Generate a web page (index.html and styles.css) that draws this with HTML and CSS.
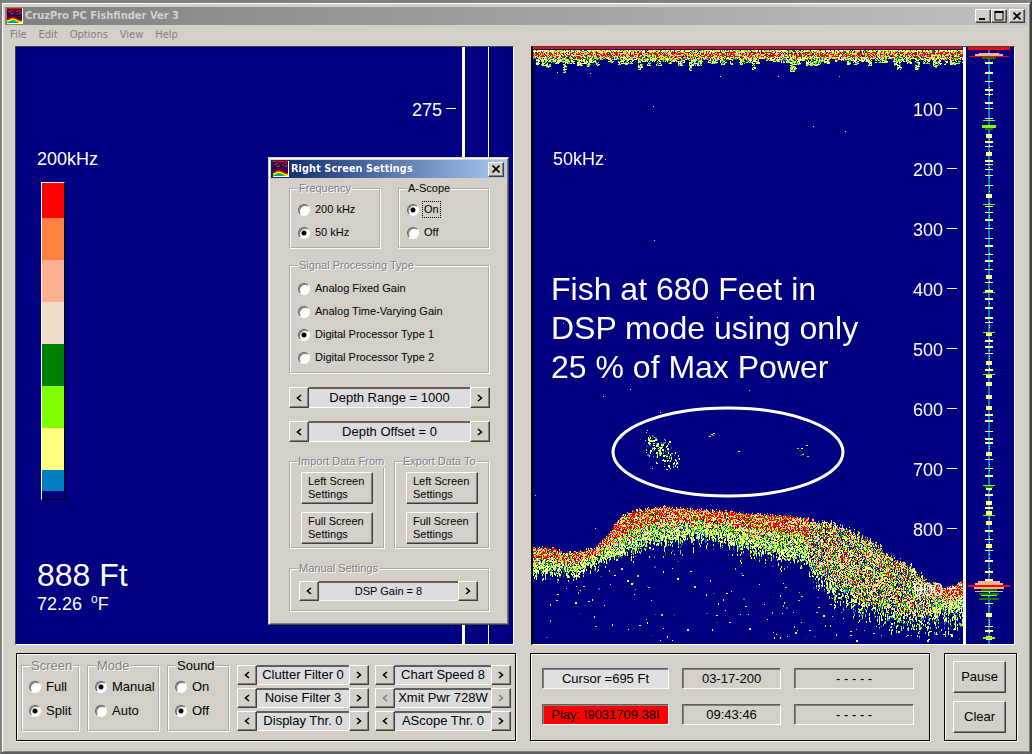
FILE: index.html
```html
<!DOCTYPE html>
<html lang="en">
<head>
<meta charset="utf-8">
<title>CruzPro PC Fishfinder Ver 3</title>
<link rel="stylesheet" href="styles.css">
</head>
<body>
<svg class="defs" width="0" height="0" aria-hidden="true">
  <symbol id="app" viewBox="0 0 16 16">
    <rect width="16" height="16" fill="#400040"/>
    <path d="M0 .5h16" stroke="#f00"/>
    <path d="M1 3.500h2M3 2.500h3M6 4.500h1M9 3.500h2M11 2.500h3M14 4.500h1" stroke="#f00"/>
    <path d="M4 5.500h2M10 5.500h1" stroke="#0a0"/><path d="M3 4h1M12 5h2" stroke="#24f" stroke-width="2"/>
    <path d="M0 11c2 0 3-2 6-2s5 3 9 3v3H0z" fill="#f00"/>
    <path d="M0 12.500c2 0 3-2 6-2s5 3 9 3V15H0z" fill="#ff0"/>
    <path d="M0 14c2 0 3-2 6-2s4 2 7 3H0z" fill="#0c0"/>
    <path d="M2 15c2-2 5-2 8 0z" fill="#08f"/>
    <path d="M15.500 0v16M0 15.500h16" stroke="#fff"/>
  </symbol>
  <symbol id="close" viewBox="0 0 8 8"><path d="M.5.5l7 7M7.500.5l-7 7" stroke="#000" stroke-width="1.600"/></symbol>
  <symbol id="prev" viewBox="0 0 8 8"><path d="M6 1L2.500 4 6 7" fill="none" stroke="currentColor" stroke-width="1.600"/></symbol>
  <symbol id="next" viewBox="0 0 8 8"><path d="M2 1l3.500 3L2 7" fill="none" stroke="currentColor" stroke-width="1.600"/></symbol>
</svg>
<main class="window">
  <header class="titlebar">
    <svg class="app-icon"><use href="#app"/></svg>
    <h1>CruzPro PC Fishfinder Ver 3</h1>
    <div class="win-buttons">
      <button class="cap" aria-label="Minimize"><svg viewBox="0 0 10 10"><path d="M1 8h6" stroke="#000" stroke-width="2"/></svg></button>
      <button class="cap" aria-label="Maximize"><svg viewBox="0 0 10 10"><path d="M.5 1h9" stroke="#000" stroke-width="2"/><path d="M1 1v8h8V1" fill="none" stroke="#000"/></svg></button>
      <button class="cap cap-close" aria-label="Close"><svg><use href="#close"/></svg></button>
    </div>
  </header>
  <nav class="menu"><button>File</button><button>Edit</button><button>Options</button><button>View</button><button>Help</button></nav>

  <div class="screens">
    <section class="screen left-screen" aria-label="Left screen">
      <div class="chart">
        <div class="readings">
          <p class="freq">200kHz</p>
          <div class="scale"><i class="c1"></i><i class="c2"></i><i class="c3"></i><i class="c4"></i><i class="c5"></i><i class="c6"></i><i class="c7"></i><i class="c8"></i><i class="c9"></i></div>
          <p class="depth">888 Ft</p>
          <p class="temp">72.26 <sup>o</sup>F</p>
        </div>
        <ol class="marks"><li>275</li></ol>
      </div>
      <div class="scope plain"></div>
    </section>
    <section class="screen right-screen" aria-label="Right screen">
      <div class="chart">
        <canvas id="sonar" width="430" height="596"></canvas>
        <svg class="ring" viewBox="0 0 234 92"><ellipse cx="117" cy="46" rx="115" ry="44" fill="none" stroke="#fff" stroke-width="3"/></svg>
        <p class="freq">50kHz</p>
        <p class="note">Fish at 680 Feet in<br>DSP mode using only<br>25 % of Max Power</p>
        <ol class="marks"><li>100</li><li>200</li><li>300</li><li>400</li><li>500</li><li>600</li><li>700</li><li>800</li><li>900</li></ol>
      </div>
      <div class="scope"><canvas id="ascope" width="48" height="596"></canvas></div>
    </section>
  </div>

  <footer class="controls">
    <section class="panel panel-main">
      <fieldset class="g-screen"><legend class="dim">Screen</legend>
        <label><input type="radio" name="screen">Full</label>
        <label><input type="radio" name="screen" checked>Split</label></fieldset>
      <fieldset class="g-mode"><legend class="dim">Mode</legend>
        <label><input type="radio" name="mode" checked>Manual</label>
        <label><input type="radio" name="mode">Auto</label></fieldset>
      <fieldset class="g-sound"><legend>Sound</legend>
        <label><input type="radio" name="sound">On</label>
        <label><input type="radio" name="sound" checked>Off</label></fieldset>
      <div class="spins">
        <div class="spin"><button aria-label="Decrease"><svg><use href="#prev"/></svg></button><output>Clutter Filter 0</output><button aria-label="Increase"><svg><use href="#next"/></svg></button></div>
        <div class="spin"><button aria-label="Decrease"><svg><use href="#prev"/></svg></button><output>Chart Speed 8</output><button aria-label="Increase"><svg><use href="#next"/></svg></button></div>
        <div class="spin"><button aria-label="Decrease"><svg><use href="#prev"/></svg></button><output>Noise Filter 3</output><button aria-label="Increase"><svg><use href="#next"/></svg></button></div>
        <div class="spin"><button disabled aria-label="Decrease"><svg><use href="#prev"/></svg></button><output>Xmit Pwr 728W</output><button disabled aria-label="Increase"><svg><use href="#next"/></svg></button></div>
        <div class="spin"><button aria-label="Decrease"><svg><use href="#prev"/></svg></button><output>Display Thr. 0</output><button aria-label="Increase"><svg><use href="#next"/></svg></button></div>
        <div class="spin"><button aria-label="Decrease"><svg><use href="#prev"/></svg></button><output>AScope Thr. 0</output><button aria-label="Increase"><svg><use href="#next"/></svg></button></div>
      </div>
    </section>
    <section class="panel panel-status">
      <output class="light">Cursor =695 Ft</output><output>03-17-200</output><output>- - - - -</output>
      <output class="alert">Play: I9031709.38I</output><output>09:43:46</output><output>- - - - -</output>
    </section>
    <section class="panel panel-actions"><button>Pause</button><button>Clear</button></section>
  </footer>
</main>

<section class="dialog" role="dialog" aria-labelledby="dlg-title">
  <header class="titlebar active">
    <svg class="app-icon"><use href="#app"/></svg>
    <h2 id="dlg-title">Right Screen Settings</h2>
    <button class="cap cap-close" aria-label="Close"><svg><use href="#close"/></svg></button>
  </header>
  <div class="dialog-body">
    <div class="pair wide">
      <fieldset><legend class="dim">Frequency</legend>
        <label><input type="radio" name="freq">200 kHz</label>
        <label><input type="radio" name="freq" checked>50 kHz</label></fieldset>
      <fieldset><legend>A-Scope</legend>
        <label><input type="radio" name="scope" checked><span class="focused">On</span></label>
        <label><input type="radio" name="scope">Off</label></fieldset>
    </div>
    <fieldset class="dsp"><legend class="dim">Signal Processing Type</legend>
      <label><input type="radio" name="dsp">Analog Fixed Gain</label>
      <label><input type="radio" name="dsp">Analog Time-Varying Gain</label>
      <label><input type="radio" name="dsp" checked>Digital Processor Type 1</label>
      <label><input type="radio" name="dsp">Digital Processor Type 2</label></fieldset>
    <div class="spin tall"><button aria-label="Decrease"><svg><use href="#prev"/></svg></button><output>Depth Range = 1000</output><button aria-label="Increase"><svg><use href="#next"/></svg></button></div>
    <div class="spin tall"><button aria-label="Decrease"><svg><use href="#prev"/></svg></button><output>Depth Offset = 0</output><button aria-label="Increase"><svg><use href="#next"/></svg></button></div>
    <div class="pair">
      <fieldset class="copy"><legend class="dim">Import Data From</legend><button>Left Screen<br>Settings</button><button>Full Screen<br>Settings</button></fieldset>
      <fieldset class="copy"><legend class="dim">Export Data To</legend><button>Left Screen<br>Settings</button><button>Full Screen<br>Settings</button></fieldset>
    </div>
    <fieldset class="manual"><legend class="dim">Manual Settings</legend>
      <div class="spin small"><button aria-label="Decrease"><svg><use href="#prev"/></svg></button><output>DSP Gain = 8</output><button aria-label="Increase"><svg><use href="#next"/></svg></button></div></fieldset>
  </div>
</section>
<script src="sonar.js"></script>
</body>
</html>
```

FILE: styles.css
```css
* { box-sizing: border-box; }
body {
  margin: 0;
  background: #808080;
  color: #000;
  font: 13px/16px "Liberation Sans", Arial, sans-serif;
}
p, h1, h2, ol { margin: 0; padding: 0; }
.defs { position: absolute; }
button { font: inherit; color: inherit; padding: 0; }

.window {
  display: flex;
  flex-direction: column;
  min-height: 100vh;
  background: #d4d0c8;
  border: 2px solid;
  border-color: #808080 #404040 #606060 #808080;
  border-top-width: 3px;
  box-shadow: inset 1px 1px #fff, inset -1px -1px #808080;
  padding: 4px 3px 0 3px;
}
.titlebar {
  display: flex;
  align-items: center;
  gap: 2px;
  height: 18px;
  padding: 0 2px;
  background: linear-gradient(90deg, #808080, #c0c0c0);
  color: #d4d0c8;
}
.titlebar.active { background: linear-gradient(90deg, #0a246a, #a6caf0); color: #fff; }
.titlebar h1, .titlebar h2 { flex: 1; font: bold 11px/16px "DejaVu Sans Condensed", "Noto Sans", sans-serif; white-space: nowrap; }
.app-icon { width: 16px; height: 16px; flex: none; }
.win-buttons { display: flex; }
.cap {
  width: 16px;
  height: 14px;
  display: grid;
  place-items: center;
  background: #d4d0c8;
  border: 1px solid;
  border-color: #fff #404040 #404040 #fff;
  box-shadow: inset -1px -1px #808080;
}
.cap svg { width: 10px; height: 10px; }
.cap.cap-close svg { width: 8px; height: 8px; }
.win-buttons .cap-close { margin-left: 2px; }
.menu { display: flex; gap: 12px; padding: 2px 5px 3px; }
.menu button {
  border: 0;
  background: none;
  color: #808080;
  font: 11px/16px "DejaVu Sans Condensed", "Noto Sans", sans-serif;
}

.screens { flex: 1; display: grid; grid-template-columns: 499fr 484fr; gap: 17px; padding: 0 12px 0 10px; }
.screen {
  display: flex;
  background: #000080;
  border: 1px solid;
  border-color: #404040 #fff #fff #404040;
  color: #fff;
}
.right-screen { border-left: 2px solid #000; }
.chart { position: relative; flex: 1; }
.scope { width: 51px; border-left: 3px solid #fff; }
.scope.plain { background: linear-gradient(#fff, #fff) 23px 0 / 1px 100% no-repeat; }
canvas { display: block; width: 100%; height: 100%; image-rendering: pixelated; }
.chart > canvas { position: absolute; inset: 0; }
.scope canvas { width: 48px; }
.freq { font-size: 18px; line-height: 20px; }
.readings { padding: 102px 0 0 21px; }
.scale { display: flex; flex-direction: column; width: 24px; margin: 13px 0 0 4px; border: 1px solid #000; border-left-color: #fff; border-top-color: #fff; }
.scale i { height: 42px; }
.scale .c1 { height: 35px; background: #f00; }
.c2 { background: #ff8040; }
.c3 { background: #ffb090; }
.c4 { background: #f0dcc8; }
.c5 { background: #008000; }
.c6 { background: #80ff00; }
.c7 { background: #ffff80; }
.scale .c8 { height: 21px; background: #0080c0; }
.scale .c9 { height: 8px; }
.depth { margin-top: 57px; font-size: 32px; line-height: 36px; }
.temp { font-size: 18px; line-height: 20px; }
.temp sup { font-size: 12px; line-height: 12px; margin-left: 4px; }
.marks { position: absolute; top: 33px; right: 6px; list-style: none; font-size: 18px; line-height: 60px; }
.marks li { display: flex; gap: 4px; }
.marks li::after { content: ""; width: 10px; height: 1px; margin-top: 28px; background: #fff; }
.right-screen .freq { position: absolute; top: 102px; left: 20px; }
.note { position: absolute; top: 223px; left: 18px; font-size: 32px; line-height: 39px; white-space: nowrap; }
.ring { position: absolute; top: 359px; left: 78px; width: 234px; height: 92px; }

.controls { display: grid; grid-template-columns: 501fr 401fr 73fr; gap: 14px; padding: 8px 10px 11px 11px; }
.panel { border: 1px solid #000; box-shadow: inset 1px 1px #fff, 1px 1px #fff; height: 88px; }
.panel-main { display: flex; gap: 7px; padding: 5px 4px; }
fieldset { margin: 0; min-width: 0; padding: 0 0 0 6px; border: 2px groove #fff; }
legend { padding: 0 1px; margin-left: 1px; line-height: 14px; }
.dim { color: #808080; text-shadow: 1px 1px #fff; }
label { display: flex; align-items: center; gap: 5px; height: 24px; white-space: nowrap; }
.panel-main fieldset { height: 73px; padding-top: 2px; }
.g-screen { width: 59px; }
.g-mode { width: 73px; }
.g-sound { width: 63px; }
input[type="radio"] {
  appearance: none;
  flex: none;
  width: 12px;
  height: 12px;
  margin: 0;
  border: 1px solid;
  border-color: #606060 #fff #fff #606060;
  border-radius: 50%;
  background: #fff;
  box-shadow: inset 1px 1px #808080;
}
input[type="radio"]:checked { background: radial-gradient(circle, #000 2px, #fff 3px); }
.spins { flex: 1; display: grid; grid-template-columns: 132fr 136fr; grid-auto-rows: 20px; gap: 3px 6px; padding-top: 6px; }
.spin { display: grid; grid-template-columns: 20px minmax(0, 1fr) 20px; height: 20px; }
.spin output { background: #dcdcdc; border-top: 2px solid #606060; border-bottom: 1px solid #fff; text-align: center; white-space: nowrap; }
.spin button, .panel-actions button, .copy button {
  background: #d4d0c8;
  border: 1px solid;
  border-color: #fff #404040 #404040 #fff;
  box-shadow: inset -1px -1px #808080;
}
.spin button { display: grid; place-items: center; }
.spin svg { width: 8px; height: 8px; }
.spin button:disabled { color: #808080; }
.panel-status {
  display: grid;
  grid-template-columns: 127fr 99fr 120fr;
  grid-auto-rows: 21px;
  gap: 15px 13px;
  padding: 14px 15px 0 11px;
}
.panel-status output { border: 1px solid; border-color: #606060 #fff #fff #606060; box-shadow: inset 1px 1px #808080; text-align: center; line-height: 19px; white-space: nowrap; }
.panel-status .light { background: #e0e0e0; }
.panel-status .alert { background: #f00; }
.panel-actions { display: grid; grid-auto-rows: 32px; gap: 8px; padding: 7px 10px 0 8px; }

.dialog {
  position: absolute;
  top: 157px;
  left: 268px;
  width: 241px;
  background: #d4d0c8;
  border: 1px solid;
  border-color: #d4d0c8 #404040 #404040 #d4d0c8;
  box-shadow: inset 1px 1px #fff, inset -1px -1px #808080;
  padding: 2px;
  font-size: 11px;
  line-height: 13px;
}
.dialog .cap { height: 15px; }
.dialog-body { display: flex; flex-direction: column; gap: 13px; padding: 4px 16px 10px 18px; }
.dialog-body > .wide { margin-bottom: -3px; }
.dialog label { height: 23px; }
.dialog fieldset { padding-top: 3px; padding-bottom: 3px; }
.dialog .dsp { padding-top: 5px; }
.dialog legend { line-height: 13px; }
.dialog input[type="radio"] { margin-left: 1px; }
.pair { display: grid; grid-template-columns: 1fr 1fr; gap: 9px; }
.pair.wide { gap: 17px; }
.focused { outline: 1px dotted #000; outline-offset: 1px; }
.spin.tall { font-size: 13px; line-height: 18px; height: 21px; }
.spin.small { line-height: 16px; }
.dialog .copy { padding: 4px 10px 3px; }
.copy legend { margin-left: -4px; white-space: nowrap; }
.copy button { display: block; width: 100%; height: 32px; padding-left: 6px; text-align: left; }
.copy button + button { margin-top: 8px; }
.dialog .manual { padding: 6px 10px 9px 8px; }
.manual legend { margin-left: -1px; }
```

FILE: sonar.js
```js
// Small seeded generator so each sweep draws the same echoes.
let seed = 20317;
function rnd() {
  seed = (seed * 1664525 + 1013904223) >>> 0;
  return seed / 4294967296;
}
const RED = '#ff0000', PEACH = '#ffb090', SAND = '#f0dcc8', YELLOW = '#ffff80',
      LIME = '#80ff00', GREEN = '#008000', BLUE = '#0080c0';
const STRONG = [RED, RED, RED, RED, PEACH, PEACH, YELLOW, SAND, LIME, GREEN];
const MEDIUM = [RED, PEACH, PEACH, SAND, YELLOW, YELLOW, YELLOW, LIME, LIME, GREEN, GREEN, BLUE];
const WEAK = [YELLOW, YELLOW, YELLOW, YELLOW, LIME, LIME, GREEN, BLUE, SAND];
const pick = list => list[Math.floor(rnd() * list.length)];

const g = document.getElementById('sonar').getContext('2d');
function dot(x, y, w, h, color) {
  g.fillStyle = color;
  g.fillRect(Math.round(x), Math.round(y), w, h);
}
function at(points, x) {
  for (let i = 1; i < points.length; i++) {
    const [x0, y0] = points[i - 1], [x1, y1] = points[i];
    if (x <= x1) return y0 + (y1 - y0) * (x - x0) / (x1 - x0);
  }
  return points[points.length - 1][1];
}

// Surface clutter
dot(0, 0, 430, 2, RED);
let reach = 13, hold = 0;
for (let x = 0; x < 430; x++) {
  if (hold-- <= 0) {
    reach = 11 + rnd() * 8 + (rnd() > 0.82 ? 7 : 0);
    hold = 1 + rnd() * 4;
  }
  for (let y = 3; y < reach; y += 1) {
    const list = y < 5 ? WEAK : y < 10 ? STRONG : y < 13 ? MEDIUM : WEAK;
    if (rnd() < (y > 12 ? 0.72 : 0.92)) dot(x, y, rnd() > 0.6 ? 2 : 1, 1, pick(list));
  }
}
for (let y = 0; y < 25; y++) if (y === 0) dot(0, 0, 430, 2, RED);

// Sea bed echo
const crest = [[0,499],[20,500],[30,504],[50,502],[62,499],[73,488],[83,474],[92,465],[107,461],[132,458],[165,461],[205,464],[250,467],[297,471],[312,477],[332,485],[347,496],[362,507],[382,518],[397,530],[412,540],[430,533]];
const base = [[0,521],[37,523],[67,512],[97,502],[117,492],[167,486],[207,494],[247,504],[272,509],[290,526],[312,544],[337,555],[367,563],[397,565],[430,558]];
for (let x = 0; x < 430; x++) {
  const t = at(crest, x) + Math.round(rnd() * 3 - 1);
  const b = at(base, x) + rnd() * 8 - 3;
  const slope = x > 275 && x < 400;
  const spray = slope ? rnd() * 6 : 0;
  for (let y = t + spray; y < b; y++) {
    const d = (y - t) / (b - t);
    const list = slope ? (rnd() < 0.3 - d * 0.2 ? STRONG : MEDIUM) : d < 0.45 ? STRONG : d < 0.7 ? MEDIUM : WEAK;
    const fill = slope ? 0.72 : 0.97 - d * 0.2;
    if (rnd() < fill) dot(x, y, 1, rnd() > 0.4 ? 2 : 1, pick(list));
  }
  const tail = (x > 270 ? 22 : x > 200 ? 13 : 7) * rnd();
  for (let y = b; y < b + tail; y++) if (rnd() < 0.34) dot(x, y, 1, 2, pick(WEAK));
}
for (let i = 0; i < 260; i++) {
  const x = Math.pow(rnd(), 0.65) * 429;
  const y = at(base, x) + rnd() * (592 - at(base, x));
  dot(x, y, rnd() > 0.6 ? 2 : 1, rnd() > 0.6 ? 2 : 1, pick(WEAK));
}
// Vertical streaks trailing the bed
for (let i = 0; i < 26; i++) {
  const x = 130 + rnd() * 270, y0 = at(base, x);
  for (let y = y0; y < y0 + 12 + rnd() * 20; y += 2) if (rnd() < 0.55) dot(x + rnd() * 2, y, 1, 2, pick(WEAK));
}

// Fish returns
for (let i = 0; i < 110; i++) {
  const a = rnd() * 26, s = (rnd() + rnd() + rnd() - 1.5) * 12;
  dot(112 + a, 392 + a * 0.6 + s, rnd() > 0.6 ? 2 : 1, rnd() > 0.3 ? 2 : 1, pick(WEAK));
}
for (let i = 0; i < 20; i++) dot(140 + rnd() * 6, 404 + rnd() * 14, 1, 2, pick(WEAK));
for (let i = 0; i < 16; i++) dot(106 + rnd() * 28, 382 + rnd() * 38, 1, 1, pick(WEAK));
[[176,388],[178,386],[180,385],[179,387],[264,400],[266,402],[269,406],[268,400],[273,397],[274,408],[267,407],[205,403]].forEach(p => dot(p[0], p[1], 2, 1, pick(WEAK)));
// Stray specks
[[57,26],[121,193],[30,276],[184,270],[112,317],[70,348],[97,341],[216,342],[127,364],[87,386],[187,29],[245,29],[280,79],[312,84],[72,112],[120,59],[2,447],[62,480],[24,25],[306,29]].forEach(p => dot(p[0], p[1], 1, 1, pick([YELLOW, LIME, SAND])));

// A-scope trace
const s = document.getElementById('ascope').getContext('2d');
function bar(y, w, h, color) {
  s.fillStyle = color;
  s.fillRect(23 - Math.floor(w / 2), y, w, h);
}
bar(0, 2, 596, BLUE);
for (let y = 4; y < 596; y += 2) if (rnd() < 0.3) bar(y, 1, 1, '#fff');
for (let y = 15; y < 592;) {
  const h = rnd() > 0.72 ? 4 : 1 + Math.floor(rnd() * 2);
  bar(y, h > 3 ? 6 : 8, h, YELLOW);
  y += h + 2 + Math.floor(rnd() * 8);
}
[73, 157, 245, 285, 326, 437, 467].forEach(y => bar(y, 12, 1, LIME));
bar(78, 14, 3, LIME);
[81, 438].forEach(y => bar(y, 8, 2, GREEN));
bar(589, 12, 2, LIME);
bar(0, 42, 3, RED);
bar(6, 20, 1, PEACH);
bar(7, 28, 2, PEACH);
bar(9, 40, 1, RED);
bar(10, 14, 2, GREEN);
bar(533, 22, 2, PEACH);
bar(535, 28, 2, PEACH);
bar(537, 42, 2, RED);
bar(539, 30, 2, PEACH);
bar(541, 16, 2, GREEN);
bar(543, 28, 1, PEACH);
bar(545, 20, 2, GREEN);
bar(547, 16, 1, LIME);
bar(550, 20, 2, GREEN);
```
